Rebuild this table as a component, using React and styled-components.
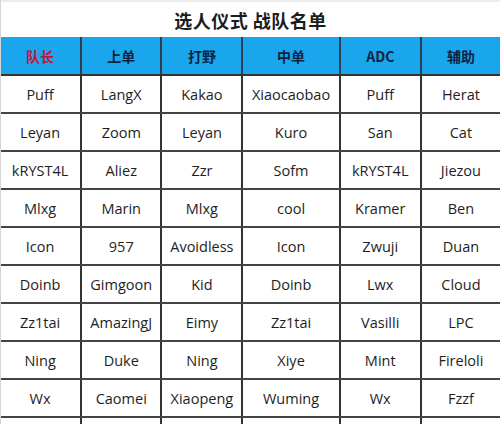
import React from 'react'
import styled, { createGlobalStyle } from 'styled-components'

const GlobalStyle = createGlobalStyle`
  html, body {
    margin: 0;
    padding: 0;
    background: #fff;
  }
  body {
    font-family: "Noto Sans", "Noto Sans CJK SC", sans-serif;
  }
`

const columns = [
    { title: '队长', width: 81, lead: true },
    { title: '上单', width: 80 },
    { title: '打野', width: 81 },
    { title: '中单', width: 97 },
    { title: 'ADC', width: 81 },
    { title: '辅助', width: 79 },
]

const roster = [
    ['Puff', 'LangX', 'Kakao', 'Xiaocaobao', 'Puff', 'Herat'],
    ['Leyan', 'Zoom', 'Leyan', 'Kuro', 'San', 'Cat'],
    ['kRYST4L', 'Aliez', 'Zzr', 'Sofm', 'kRYST4L', 'Jiezou'],
    ['Mlxg', 'Marin', 'Mlxg', 'cool', 'Kramer', 'Ben'],
    ['Icon', '957', 'Avoidless', 'Icon', 'Zwuji', 'Duan'],
    ['Doinb', 'Gimgoon', 'Kid', 'Doinb', 'Lwx', 'Cloud'],
    ['Zz1tai', 'AmazingJ', 'Eimy', 'Zz1tai', 'Vasilli', 'LPC'],
    ['Ning', 'Duke', 'Ning', 'Xiye', 'Mint', 'Fireloli'],
    ['Wx', 'Caomei', 'Xiaopeng', 'Wuming', 'Wx', 'Fzzf'],
    ['', '', '', '', '', ''],
]

const Page = styled.div`
    width: 500px;
    height: 424px;
    overflow: hidden;
    background: #fff;
    border-left: 1px solid #d6d6d6;
    box-sizing: border-box;
`

const Title = styled.h1`
    margin: 0;
    height: 37px;
    display: flex;
    align-items: center;
    justify-content: center;
    font-family: "Noto Sans CJK SC", sans-serif;
    font-size: 18px;
    font-weight: 700;
    color: #1c1c1c;
    letter-spacing: 0.5px;
    border-top: 2px solid #ececec;
    box-sizing: border-box;
`

const Table = styled.table`
    border-collapse: collapse;
    table-layout: fixed;
    width: 500px;
    margin-left: -1px;
`

const HeadCell = styled.th`
    height: 37px;
    padding: 0;
    background: #1aa6ec;
    color: ${p => (p.$lead ? '#c4163a' : '#0d2440')};
    font-family: "Noto Sans CJK SC", sans-serif;
    font-size: 14px;
    font-weight: 700;
    text-align: center;
    border-left: 2px solid #2c3e50;
    border-bottom: 2px solid #333;
    &:first-child { border-left: none; }
`

const Cell = styled.td`
    height: 36px;
    padding: 0;
    text-align: center;
    font-family: "Open Sans", "Noto Sans CJK SC", sans-serif;
    font-size: 14.5px;
    color: #1e1e1e;
    white-space: nowrap;
    border-left: 2px solid #333;
    border-bottom: 2px solid #444;
    &:first-child { border-left: none; }
`

export default function App() {
    return (
        <Page>
            <GlobalStyle />
            <Title>选人仪式 战队名单</Title>
            <Table>
                <colgroup>
                    {columns.map((col) => (
                        <col key={col.title} style={{ width: col.width }} />
                    ))}
                </colgroup>
                <thead>
                    <tr>
                        {columns.map((col) => (
                            <HeadCell key={col.title} $lead={col.lead}>{col.title}</HeadCell>
                        ))}
                    </tr>
                </thead>
                <tbody>
                    {roster.map((row, i) => (
                        <tr key={i}>
                            {row.map((name, j) => (
                                <Cell key={j}>{name}</Cell>
                            ))}
                        </tr>
                    ))}
                </tbody>
            </Table>
        </Page>
    )
}
